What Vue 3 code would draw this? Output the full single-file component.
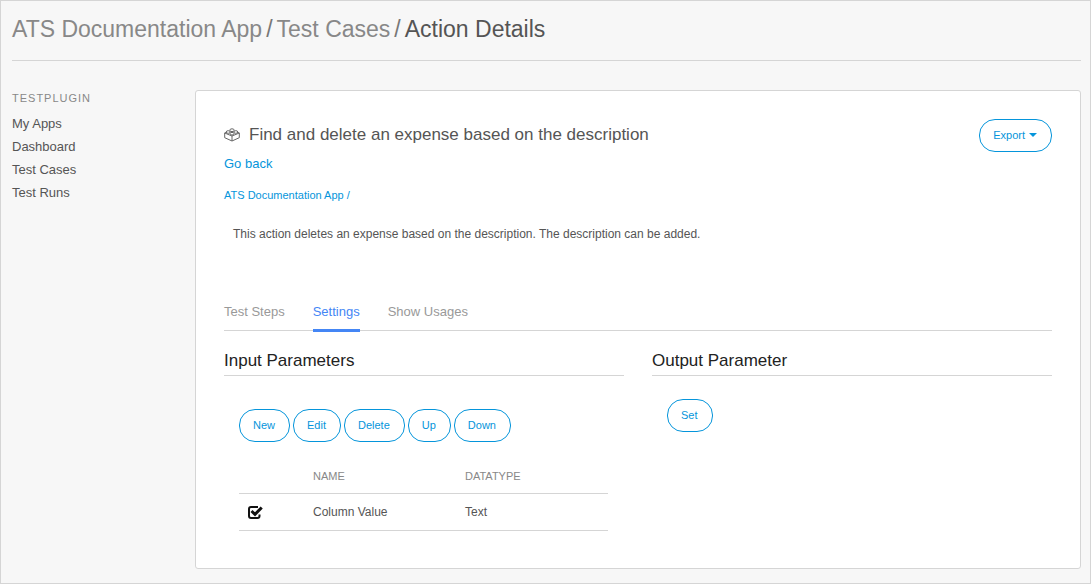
<script setup>
import { ref } from 'vue'

const navItems = ['My Apps', 'Dashboard', 'Test Cases', 'Test Runs']
const tabs = ['Test Steps', 'Settings', 'Show Usages']
const activeTab = ref('Settings')
const actions = ['New', 'Edit', 'Delete', 'Up', 'Down']
const parameters = ref([{ name: 'Column Value', datatype: 'Text', selected: true }])
</script>

<template>
  <div class="page">
    <header class="page-header">
      <h1 class="crumbs">
        <a href="#">ATS Documentation App</a>
        <span class="slash">/</span>
        <a href="#">Test Cases</a>
        <span class="slash">/</span>
        <span>Action Details</span>
      </h1>
    </header>

    <div class="body">
      <nav class="sidebar" aria-labelledby="nav-title">
        <h2 id="nav-title" class="nav-title">TESTPLUGIN</h2>
        <ul class="nav-list">
          <li v-for="item in navItems" :key="item"><a href="#">{{ item }}</a></li>
        </ul>
      </nav>

      <main class="card">
        <div class="card-head">
          <div class="intro">
            <h2 class="action-title">
              <svg class="brick" viewBox="0 0 16 14" aria-hidden="true">
                <path d="M.7 5 3 4M15.3 5 13 4M.7 5 8 8 15.3 5V9.7L8 13 .7 9.7ZM8 8V13" />
                <ellipse cx="8" cy="2.2" rx="2.2" ry="1.4" />
                <ellipse cx="4.2" cy="4" rx="2" ry="1.3" />
                <ellipse cx="11.8" cy="4" rx="2" ry="1.3" />
                <ellipse cx="8" cy="5.7" rx="2" ry="1.3" />
              </svg>
              Find and delete an expense based on the description
            </h2>
            <a class="back" href="#">Go back</a>
            <a class="app-link" href="#">ATS Documentation App /</a>
          </div>
          <button type="button" class="btn">
            Export
            <svg class="caret" viewBox="0 0 8 4" aria-hidden="true"><path d="M0 0H8L4 4Z" /></svg>
          </button>
        </div>

        <p class="description">
          This action deletes an expense based on the description. The description can be added.
        </p>

        <div class="tabs" role="tablist">
          <button
            v-for="tab in tabs"
            :key="tab"
            type="button"
            role="tab"
            class="tab"
            :class="{ active: tab === activeTab }"
            :aria-selected="tab === activeTab"
            @click="activeTab = tab"
          >{{ tab }}</button>
        </div>

        <div class="columns">
          <section>
            <h3 class="section-title">Input Parameters</h3>
            <div class="section-body inputs">
              <div class="toolbar">
                <button v-for="action in actions" :key="action" type="button" class="btn">{{ action }}</button>
              </div>
              <table class="grid">
                <thead>
                  <tr>
                    <th class="select-col"></th>
                    <th class="name-col">NAME</th>
                    <th>DATATYPE</th>
                  </tr>
                </thead>
                <tbody>
                  <tr v-for="row in parameters" :key="row.name">
                    <td>
                      <label class="check">
                        <input v-model="row.selected" type="checkbox" :aria-label="row.name" />
                        <svg viewBox="0 0 16 14" aria-hidden="true">
                          <path class="box" d="M11 2H4Q2 2 2 4V11Q2 13 4 13H10.5Q12.5 13 12.5 11V9.5" />
                          <path v-if="row.selected" class="tick" d="M4.5 6 8 9.3 14.7 2.5" />
                        </svg>
                      </label>
                    </td>
                    <td>{{ row.name }}</td>
                    <td>{{ row.datatype }}</td>
                  </tr>
                </tbody>
              </table>
            </div>
          </section>

          <section>
            <h3 class="section-title">Output Parameter</h3>
            <div class="section-body">
              <button type="button" class="btn">Set</button>
            </div>
          </section>
        </div>
      </main>
    </div>
  </div>
</template>

<style>
body {
  margin: 0;
}
</style>

<style scoped>
.page {
  box-sizing: border-box;
  min-height: 100vh;
  padding: 0 9px 14px 11px;
  border: 1px solid #d5d5d5;
  background: #f7f7f7;
  color: #555;
  font-family: "Liberation Sans", Arial, sans-serif;
  font-size: 13px;
}

h1,
h2,
h3,
p,
ul {
  margin: 0;
  padding: 0;
  font-weight: 400;
}

a {
  color: inherit;
  text-decoration: none;
}

.page-header {
  padding: 12px 0 15px;
  border-bottom: 1px solid #d5d5d5;
}

.crumbs {
  display: flex;
  flex-wrap: wrap;
  gap: 4px;
  font-size: 23px;
  line-height: 32px;
}

.crumbs a {
  color: #888;
}

.slash {
  color: #777;
}

.body {
  display: grid;
  grid-template-columns: 183px 1fr;
  align-items: start;
  padding-top: 29px;
}

.nav-title {
  color: #888;
  font-size: 11px;
  line-height: 16px;
  letter-spacing: 1px;
}

.nav-list {
  display: grid;
  padding-top: 6px;
  line-height: 23px;
  list-style: none;
}

.card {
  box-sizing: border-box;
  padding: 28px 28px 37px;
  border: 1px solid #d5d5d5;
  border-radius: 3px;
  background: #fff;
}

.card-head {
  display: flex;
  align-items: flex-start;
  justify-content: space-between;
}

.intro {
  display: flex;
  flex-direction: column;
  align-items: flex-start;
}

.action-title {
  display: flex;
  align-items: center;
  gap: 9px;
  font-size: 17px;
  line-height: 32px;
}

.brick {
  width: 16px;
  height: 14px;
  fill: #fff;
  stroke: #666;
  stroke-width: 1;
  stroke-linejoin: round;
}

.back,
.app-link {
  color: #0595db;
}

.back {
  line-height: 26px;
}

.app-link {
  padding-top: 9px;
  font-size: 11px;
  line-height: 18px;
}

.btn {
  display: inline-flex;
  align-items: center;
  gap: 4px;
  height: 33px;
  padding: 0 14px 1px 13px;
  border: 1px solid #0595db;
  border-radius: 16px;
  background: #fff;
  color: #0595db;
  font-family: inherit;
  font-size: 11px;
}

.caret {
  width: 8px;
  height: 4px;
  fill: currentColor;
}

.description {
  padding: 20px 9px 0;
  font-size: 12px;
  line-height: 20px;
}

.tabs {
  display: flex;
  gap: 28px;
  margin-top: 59px;
  border-bottom: 1px solid #d5d5d5;
}

.tab {
  margin-bottom: -2px;
  padding: 0 0 8px;
  border: 0;
  border-bottom: 3px solid transparent;
  background: none;
  color: #999;
  font-family: inherit;
  font-size: 13px;
  line-height: 18px;
}

.tab.active {
  border-color: #4486f5;
  color: #4486f5;
}

.columns {
  display: grid;
  grid-template-columns: 1fr 1fr;
  gap: 28px;
  padding-top: 19px;
}

.section-title {
  padding-bottom: 3px;
  border-bottom: 1px solid #d5d5d5;
  color: #222;
  font-size: 17px;
  line-height: 22px;
}

.section-body {
  padding: 23px 16px 0 15px;
}

.section-body.inputs {
  padding-top: 33px;
}

.toolbar {
  display: flex;
  gap: 3px;
}

.grid {
  width: 100%;
  margin-top: 17px;
  border-collapse: collapse;
  table-layout: fixed;
  font-size: 12px;
}

.grid th,
.grid td {
  box-sizing: border-box;
  height: 37px;
  padding: 0 8px;
  border-bottom: 1px solid #d5d5d5;
  text-align: left;
}

.grid th {
  height: 34px;
  color: #888;
  font-size: 11px;
  font-weight: 400;
}

.select-col {
  width: 66px;
}

.name-col {
  width: 152px;
}

.check {
  display: grid;
  width: 16px;
  height: 14px;
}

.check input,
.check svg {
  grid-area: 1 / 1;
  width: 16px;
  height: 14px;
  margin: 0;
}

.check input {
  appearance: none;
}

.check svg {
  fill: none;
  stroke: #111;
  pointer-events: none;
}

.box {
  stroke-width: 2;
}

.tick {
  stroke-width: 3;
}
</style>
